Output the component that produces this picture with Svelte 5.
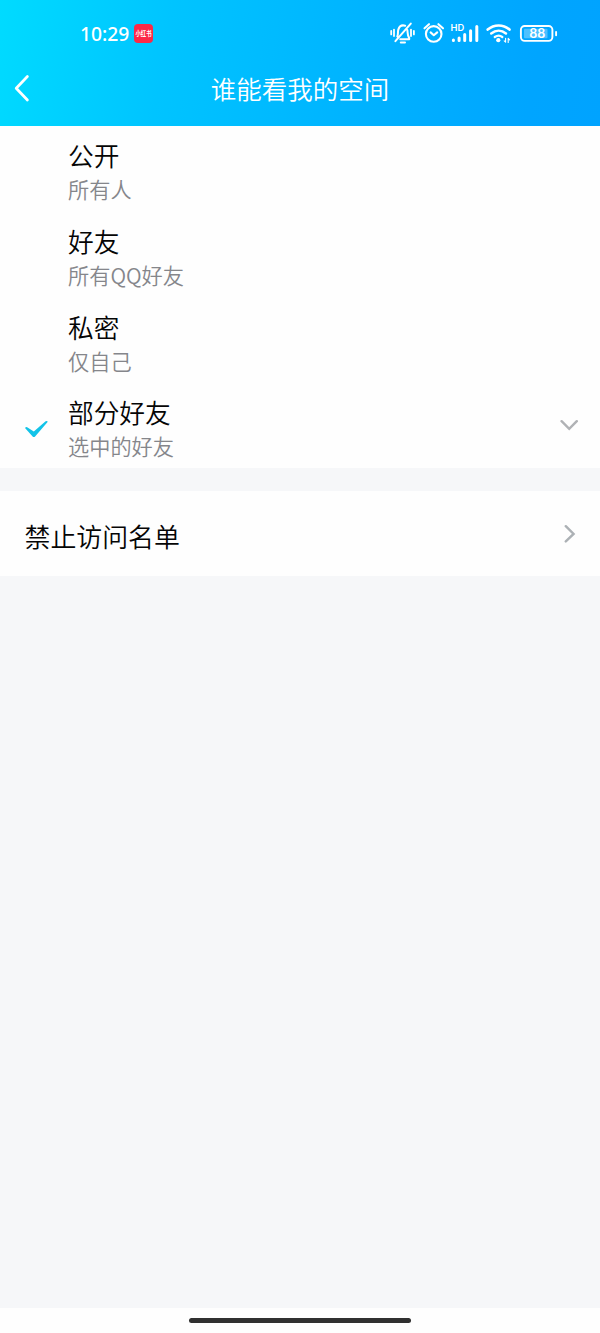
<script>
  const options = [
    { title: '公开', note: '所有人' },
    { title: '好友', note: '所有QQ好友' },
    { title: '私密', note: '仅自己' },
    { title: '部分好友', note: '选中的好友', selected: true }
  ];
</script>

<div class="screen">
  <header>
    <div class="status">
      <div class="clock">
        <span class="time">10:29</span>
        <span class="app"><span>小红书</span></span>
      </div>
      <svg class="indicators" width="172" height="28" viewBox="0 0 172 28" fill="none" stroke="#fff" stroke-width="1.9" stroke-linecap="round" stroke-linejoin="round">
        <path d="M7.3 17.4C8.4 15.8 7.6 12.9 8.3 10.6C9.3 7.3 12 5.8 15.2 6.7M17.3 10.9C17.9 13.7 17.2 16.6 19.2 19V20.3H10.3M20.8 4.6L5.4 22.2M10.8 23.6H15" stroke-width="2" />
        <path d="M1.2 12V15.4M4 10.6V17M21 10.6V17M23.9 12V15.4" stroke-width="1.8" />
        <circle cx="43.7" cy="14.9" r="7.8" stroke-width="2.1" />
        <path d="M34.5 9.3L39 5.2M48.4 5.2L53 9.3M40.6 13.4L43.8 16.2L47.2 13.4" stroke-width="2.1" />
        <text x="60.6" y="12" class="hd">HD</text>
        <path d="M63.4 21V21.4M69.1 19V21.4M74.7 15.6V21.4M80.6 11.8V21.4M86.8 7.4V21.4" stroke-width="3" />
        <path d="M97.7 10.6C104.2 5.1 113.1 5.1 119.5 10.6" stroke-width="2.6" />
        <path d="M101.2 14.5C105.8 10.7 111.5 10.7 116 14.5" stroke-width="2.5" />
        <path d="M104.8 18C107.5 16.2 109.8 16.2 112.3 18" stroke-width="2.3" />
        <circle cx="108.3" cy="21.2" r="2.1" fill="#fff" stroke="none" />
        <path d="M115.6 19.2V23.2L114.2 21.8M118.2 23.4V19.4L119.6 20.8" stroke-width="1.1" />
        <rect x="130.9" y="7" width="31.5" height="14.9" rx="3.8" />
        <rect x="134" y="9.8" width="23.5" height="9.4" rx="1" fill="#fff" fill-opacity=".3" stroke="none" />
        <path d="M166.1 12.9V16.3" stroke-width="1.9" />
        <text x="147.3" y="19" class="charge">88</text>
      </svg>
    </div>
    <div class="nav">
      <svg width="18" height="30" viewBox="0 0 18 30" fill="none" stroke="#fff" stroke-width="2.7" stroke-linecap="round" stroke-linejoin="round"><path d="M14.4 2.5L3.2 14.2L14.4 26" /></svg>
      <h1>谁能看我的空间</h1>
    </div>
  </header>

  <ul>
    {#each options as option}
      <li>
        <div class="mark">
          {#if option.selected}
            <svg width="26" height="20" viewBox="0 0 26 20" fill="#12c3e8"><path d="M1 7.9Q2.2 6.3 3.6 7.4L9.8 11.6L21.6 1.2Q22.9.4 23.8 1.8L11.1 16.5Q9.9 17.7 8.6 16.5Z" /></svg>
          {/if}
        </div>
        <div class="label">
          <div class="title">{option.title}</div>
          <div class="note">{option.note}</div>
        </div>
        {#if option.selected}
          <svg width="20" height="14" viewBox="0 0 20 14" fill="none" stroke="#b0b2b5" stroke-width="2.4" stroke-linecap="round"><path d="M1.6 3.2L9.2 10.9L16.8 3.2" /></svg>
        {/if}
      </li>
    {/each}
  </ul>

  <div class="blocked">
    <span>禁止访问名单</span>
    <svg width="14" height="20" viewBox="0 0 14 20" fill="none" stroke="#acb1b5" stroke-width="2.4" stroke-linecap="round"><path d="M2.8 3.2L10.6 10.9L2.8 18.4" /></svg>
  </div>

  <footer><div></div></footer>
</div>

<style>
  :global(body) { margin: 0; }
  .screen {
    width: 600px;
    height: 1333px;
    display: flex;
    flex-direction: column;
    overflow: hidden;
    background: #f6f7f9;
    color: #050505;
    font-family: "Noto Sans CJK SC", sans-serif;
    font-weight: 350;
  }
  svg { display: block; flex: none; }
  header {
    height: 125.6px;
    flex: none;
    background: linear-gradient(100deg, #00dbff 0%, #00c4ff 28%, #00b3ff 60%, #00a5ff 88%, #00a3ff 100%);
    color: #fff;
  }
  .status {
    height: 40px;
    padding: 13px 38px 0 80px;
    display: flex;
    justify-content: space-between;
    align-items: flex-start;
  }
  .clock { display: flex; align-items: center; height: 41px; gap: 5px; }
  .time { width: 49px; font: 500 19.3px/28px "Noto Sans", sans-serif; white-space: nowrap; }
  .app {
    width: 18.5px;
    height: 18.5px;
    border-radius: 4px;
    background: #fc2947;
    display: flex;
    align-items: center;
    justify-content: center;
  }
  .app span { flex: none; font-size: 9px; font-weight: 700; line-height: 12px; transform: scale(.6, .82); }
  .indicators { margin-top: 6px; }
  text { fill: #fff; stroke: none; }
  .hd { font: 600 9.3px Inter, sans-serif; }
  .charge { font: 600 12.6px Inter, sans-serif; text-anchor: middle; }
  .nav {
    height: 72px;
    display: grid;
    grid-template-columns: 18px 1fr 18px;
    align-items: center;
    padding: 0 12.5px;
  }
  h1 { margin: 0 0 2px; text-align: center; font-size: 25.5px; font-weight: 350; line-height: 36px; }
  ul { margin: 0; padding: 0; list-style: none; background: #fefefe; height: 342.4px; flex: none; }
  li { height: 85.6px; display: flex; align-items: center; padding: 0 20px 0 24px; box-sizing: border-box; }
  .mark { width: 44px; padding-top: 9px; box-sizing: border-box; }
  .label { flex: 1; padding-top: 6px; }
  .title { font-size: 25.7px; line-height: 36px; }
  .note { font-size: 21.2px; line-height: 32px; color: #85868b; }
  .blocked {
    height: 85px;
    margin-top: 23px;
    padding: 0 23px 0 24.5px;
    box-sizing: border-box;
    flex: none;
    display: flex;
    align-items: center;
    justify-content: space-between;
    background: #fefefe;
    font-size: 25.9px;
    line-height: 36px;
  }
  .blocked span { padding-top: 6px; }
  footer {
    height: 25px;
    margin-top: auto;
    display: flex;
    align-items: center;
    justify-content: center;
    background: #fefefe;
  }
  footer div { width: 222px; height: 5.5px; border-radius: 3px; background: #303030; }
</style>
